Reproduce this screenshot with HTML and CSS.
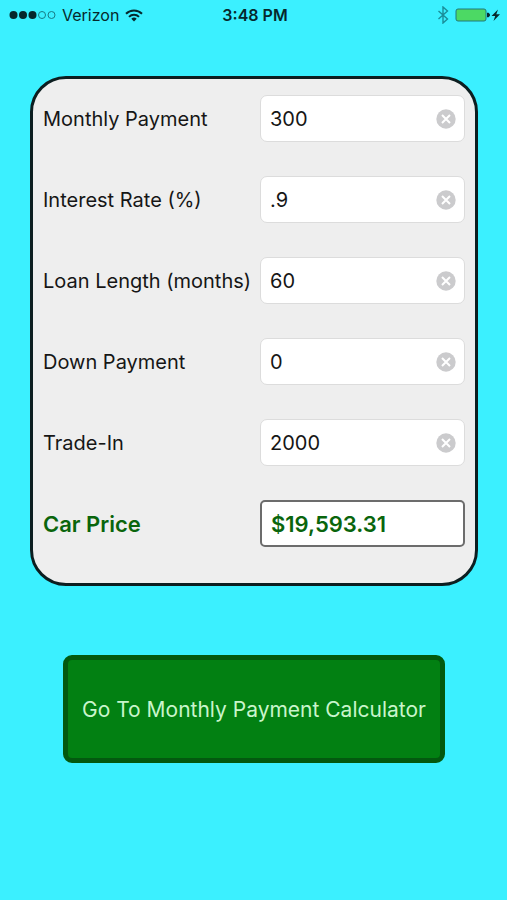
FILE: index.html
```html
<!DOCTYPE html>
<html lang="en">
<head>
<meta charset="utf-8">
<meta name="viewport" content="width=device-width, initial-scale=1">
<title>Car Price Calculator</title>
<link rel="stylesheet" href="styles.css">
</head>
<body>
<svg class="defs" width="0" height="0" aria-hidden="true">
  <symbol id="clear" viewBox="0 0 20 20">
    <circle cx="10" cy="10" r="9.700" fill="#cbcbcd"/>
    <path d="M6 6l8 8M14 6l-8 8" stroke="#fff" stroke-width="2" fill="none"/>
  </symbol>
</svg>
<header class="status">
  <div class="status-left">
    <svg width="47" height="10" viewBox="0 0 47 10" aria-hidden="true">
      <g fill="#06282c"><circle cx="4.500" cy="5" r="4"/><circle cx="14" cy="5" r="4"/><circle cx="23.500" cy="5" r="4"/></g>
      <g fill="none" stroke="#177b84"><circle cx="33" cy="5" r="3.500"/><circle cx="42.500" cy="5" r="3.500"/></g>
    </svg>
    <span>Verizon</span>
    <svg width="18" height="13" viewBox="0 0 18 13" aria-hidden="true">
      <g fill="none" stroke="#06282c" stroke-width="2"><path d="M1 4.700a11.300 11.300 0 0 1 16 0"/><path d="M4 7.900a7 7 0 0 1 10 0"/></g>
      <path d="M9 12.500L6.300 9.800a3.800 3.800 0 0 1 5.400 0z" fill="#06282c"/>
    </svg>
  </div>
  <time class="clock">3:48 PM</time>
  <div class="status-right">
    <svg width="12" height="18" viewBox="0 0 12 18" aria-hidden="true">
      <path d="M1.500 5l9 8L6 17V1l4.500 4-9 8" fill="none" stroke="#1a8d99" stroke-width="1.400"/>
    </svg>
    <svg width="46" height="14" viewBox="0 0 46 14" aria-hidden="true">
      <rect x="1" y="1" width="30" height="12" rx="2" fill="#4cd964" stroke="#22787c"/>
      <path d="M32.500 5a2 2 0 0 1 0 4z" fill="#06282c" stroke="#06282c"/>
      <path d="M43 1.500L36.500 8h3.700L38.500 13 45 6.200h-3.700z" fill="#06282c"/>
    </svg>
  </div>
</header>
<main>
  <form class="card">
    <label for="payment">Monthly Payment</label>
    <div class="field"><input id="payment" type="text" inputmode="decimal" value="300"><button type="button" class="clear" aria-label="Clear"><svg width="20" height="20"><use href="#clear"/></svg></button></div>
    <label for="rate">Interest Rate (%)</label>
    <div class="field"><input id="rate" type="text" inputmode="decimal" value=".9"><button type="button" class="clear" aria-label="Clear"><svg width="20" height="20"><use href="#clear"/></svg></button></div>
    <label for="length">Loan Length (months)</label>
    <div class="field"><input id="length" type="text" inputmode="decimal" value="60"><button type="button" class="clear" aria-label="Clear"><svg width="20" height="20"><use href="#clear"/></svg></button></div>
    <label for="down">Down Payment</label>
    <div class="field"><input id="down" type="text" inputmode="decimal" value="0"><button type="button" class="clear" aria-label="Clear"><svg width="20" height="20"><use href="#clear"/></svg></button></div>
    <label for="trade">Trade-In</label>
    <div class="field"><input id="trade" type="text" inputmode="decimal" value="2000"><button type="button" class="clear" aria-label="Clear"><svg width="20" height="20"><use href="#clear"/></svg></button></div>
    <label for="price" class="total">Car Price</label>
    <div class="field"><input id="price" class="result" type="text" value="$19,593.31" readonly></div>
  </form>
  <button type="button" class="go">Go To Monthly Payment Calculator</button>
</main>
</body>
</html>
```
FILE: styles.css
```css
* {
  box-sizing: border-box;
}

body {
  margin: 0;
  min-height: 100vh;
  background: #3bf0ff;
  color: #161616;
  font-family: Inter, "Liberation Sans", sans-serif;
  font-size: 20px;
}

.defs {
  position: absolute;
}

.status {
  display: grid;
  grid-template-columns: 1fr auto 1fr;
  align-items: center;
  height: 30px;
  padding: 0 6px 0 9px;
  color: #06282c;
  font-size: 16px;
}

.status svg {
  display: block;
}

.status-left,
.status-right {
  display: flex;
  align-items: center;
  gap: 6px;
}

.status-right {
  justify-content: flex-end;
}

.clock {
  font-weight: 600;
}

main {
  padding: 46px 29px 0 30px;
}

.card {
  display: grid;
  grid-template-columns: 1fr 205px;
  grid-auto-rows: 47px;
  align-items: center;
  row-gap: 34px;
  padding: 16px 10px 36px;
  background: #eee;
  border: 3px solid #0c1e20;
  border-radius: 36px;
}

label {
  white-space: nowrap;
}

.total {
  color: #0a650c;
  font-size: 22px;
  font-weight: 600;
}

.field {
  position: relative;
}

.field input {
  display: block;
  width: 100%;
  height: 47px;
  padding: 0 36px 0 9px;
  background: #fff;
  border: 1px solid #dcdcdc;
  border-radius: 7px;
  color: #161616;
  font: inherit;
}

.field .result {
  padding: 0 9px;
  border: 2px solid #6c6c6c;
  border-radius: 5px;
  color: #0a650c;
  font-size: 22px;
  font-weight: 600;
}

.clear {
  position: absolute;
  top: 14px;
  right: 9px;
  padding: 0;
  background: none;
  border: 0;
}

.clear svg {
  display: block;
}

.go {
  display: block;
  width: calc(100% - 66px);
  min-height: 108px;
  margin: 69px auto 0;
  padding: 0;
  background: #028012;
  border: 5px solid #03590f;
  border-radius: 9px;
  color: #c9f5cb;
  font: inherit;
  font-size: 21px;
}
```
